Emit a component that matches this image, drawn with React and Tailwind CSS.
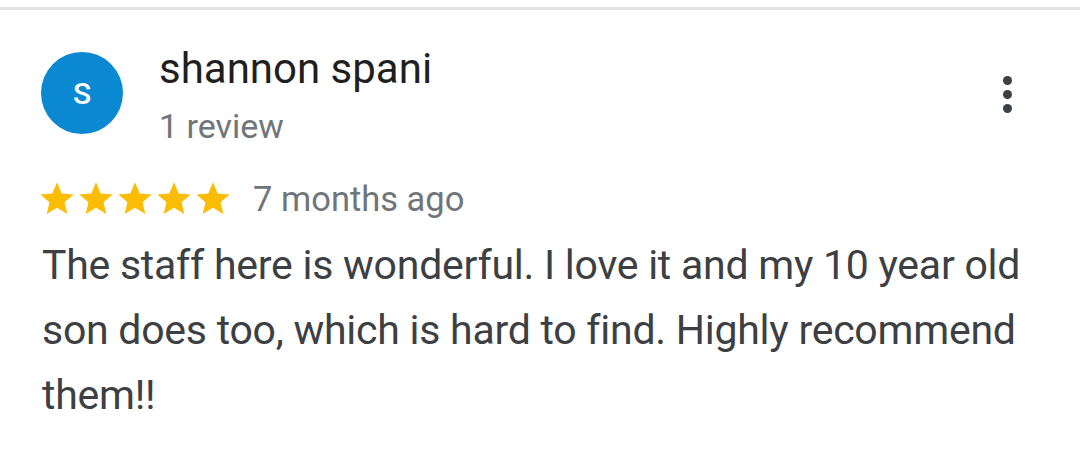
import React from "react";

function Star() {
  return (
    <svg width="40" height="40" viewBox="0 0 24 24" className="block">
      <path fill="#fbbc04" d="M12 17.27L18.18 21l-1.64-7.03L22 9.24l-7.19-.61L12 2 9.19 8.63 2 9.24l5.46 4.73L5.82 21z" />
    </svg>
  );
}

export default function App() {
  return (
    <div className="w-[1080px] h-[458px] bg-white overflow-hidden" style={{ fontFamily: "Roboto, 'Liberation Sans', sans-serif" }}>
      <div className="h-[7px]" />
      <div className="h-[3px] bg-[#e3e3e3]" />
      <div className="pl-[41px] pr-[48px]">
        <div className="flex items-start pt-[34px]">
          <div className="w-[82px] h-[82px] rounded-full bg-[#0b88d2] flex items-center justify-center text-white text-[30px] font-medium mt-[8px]">
            S
          </div>
          <div className="ml-[36px] flex-1">
            <div className="text-[42px] leading-[50px] text-[#1f1f1f]">shannon spani</div>
            <div className="text-[34px] leading-[40px] text-[#70757a] mt-[12px]">1 review</div>
          </div>
          <div className="flex flex-col gap-[5px] items-center mt-[32px] mr-[20px]">
            <div className="w-[9px] h-[9px] rounded-full bg-[#3c4043]" />
            <div className="w-[9px] h-[9px] rounded-full bg-[#3c4043]" />
            <div className="w-[9px] h-[9px] rounded-full bg-[#3c4043]" />
          </div>
        </div>
        <div className="flex items-center mt-[31px] h-[44px]">
          <div className="flex -ml-[4px] -space-x-[1px]">
            <Star /><Star /><Star /><Star /><Star />
          </div>
          <div className="ml-[20px] text-[34.5px] leading-[44px] text-[#70757a]">7 months ago</div>
        </div>
        <div className="text-[41px] leading-[65px] tracking-[-0.25px] text-[#3c4043] mt-[12px] pl-[1px]">
          The staff here is wonderful. I love it and my 10 year old son does too, which is hard to find. Highly recommend them!!
        </div>
      </div>
    </div>
  );
}
